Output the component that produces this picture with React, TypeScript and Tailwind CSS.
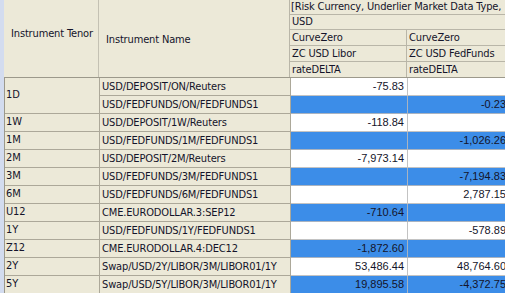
const rows = [
  { tenor: "1D", span: 2, name: "USD/DEPOSIT/ON/Reuters", a: "-75.83", b: "", blue: false },
  { tenor: null, span: 0, name: "USD/FEDFUNDS/ON/FEDFUNDS1", a: "", b: "-0.23", blue: true },
  { tenor: "1W", span: 1, name: "USD/DEPOSIT/1W/Reuters", a: "-118.84", b: "", blue: false },
  { tenor: "1M", span: 1, name: "USD/FEDFUNDS/1M/FEDFUNDS1", a: "", b: "-1,026.26", blue: true },
  { tenor: "2M", span: 1, name: "USD/DEPOSIT/2M/Reuters", a: "-7,973.14", b: "", blue: false },
  { tenor: "3M", span: 1, name: "USD/FEDFUNDS/3M/FEDFUNDS1", a: "", b: "-7,194.83", blue: true },
  { tenor: "6M", span: 1, name: "USD/FEDFUNDS/6M/FEDFUNDS1", a: "", b: "2,787.15", blue: false },
  { tenor: "U12", span: 1, name: "CME.EURODOLLAR.3:SEP12", a: "-710.64", b: "", blue: true },
  { tenor: "1Y", span: 1, name: "USD/FEDFUNDS/1Y/FEDFUNDS1", a: "", b: "-578.89", blue: false },
  { tenor: "Z12", span: 1, name: "CME.EURODOLLAR.4:DEC12", a: "-1,872.60", b: "", blue: true },
  { tenor: "2Y", span: 1, name: "Swap/USD/2Y/LIBOR/3M/LIBOR01/1Y", a: "53,486.44", b: "48,764.60", blue: false },
  { tenor: "5Y", span: 1, name: "Swap/USD/5Y/LIBOR/3M/LIBOR01/1Y", a: "19,895.58", b: "-4,372.75", blue: true },
];

const ui = "font-['DejaVu_Sans_Condensed','DejaVu_Sans',sans-serif] text-[11px] tracking-[-0.15px]";

function HeadCell({ w, children }: { w: string; children: React.ReactNode }) {
  return (
    <div className={`h-[16px] ${w} shrink-0 border-t border-r border-[#b9b6a8] pl-[2px] leading-[15px] whitespace-nowrap overflow-hidden`}>
      {children}
    </div>
  );
}

export default function App() {
  return (
    <div className={`w-[505px] h-[293px] overflow-hidden flex bg-[#ece9d8] text-[#14142a] ${ui}`}>
      <div className="w-[4px] shrink-0 bg-[#d3dcef]" />
      <div className="flex flex-col w-[501px] shrink-0">
        {/* header */}
        <div className="flex h-[78px] border-b border-[#9c998b]">
          <div className="w-[95px] shrink-0 border-r border-[#c4c1b3] flex items-center pl-[7px] pb-[9px]">
            Instrument Tenor
          </div>
          <div className="w-[191px] shrink-0 border-r border-[#b9b6a8] flex items-center pl-[7px] pt-[3px]">
            Instrument Name
          </div>
          <div className="flex flex-col w-[215px] overflow-hidden">
            <div className="h-[15px] pl-[1px] leading-[14px] whitespace-nowrap">
              [Risk Currency, Underlier Market Data Type,
            </div>
            <div className="h-[15px] border-t border-[#b9b6a8] pl-[2px] leading-[14px]">USD</div>
            <div className="flex">
              <HeadCell w="w-[117px]">CurveZero</HeadCell>
              <HeadCell w="w-[102px]">CurveZero</HeadCell>
            </div>
            <div className="flex">
              <HeadCell w="w-[117px]">ZC USD Libor</HeadCell>
              <HeadCell w="w-[102px]">ZC USD FedFunds</HeadCell>
            </div>
            <div className="flex">
              <HeadCell w="w-[117px]">rateDELTA</HeadCell>
              <HeadCell w="w-[102px]">rateDELTA</HeadCell>
            </div>
          </div>
        </div>
        {/* body */}
        <div className="grid grid-cols-[95px_191px_117px_102px] auto-rows-[18px] border-l border-[#9c998b]">
          {rows.map((r, i) => {
            const num = `font-['Liberation_Sans',Arial,sans-serif] text-[11px] tracking-normal text-right pr-[3px] leading-[17px] border-b border-r ${
              r.blue ? "bg-[#3c8de8] border-[#a9b3c0]" : "bg-white border-[#c3c3c3]"
            }`;
            return (
              <div key={i} className="contents">
                {r.span > 0 && (
                  <div
                    className={`border-b border-r border-[#aca899] pl-[1px] flex items-center ${
                      r.span === 2 ? "row-span-2" : ""
                    }`}
                  >
                    {r.tenor}
                  </div>
                )}
                <div className="border-b border-r border-[#aca899] pl-[2px] leading-[17px] whitespace-nowrap overflow-hidden">
                  {r.name}
                </div>
                <div className={num}>{r.a}</div>
                <div className={num}>{r.b}</div>
              </div>
            );
          })}
        </div>
      </div>
    </div>
  );
}
